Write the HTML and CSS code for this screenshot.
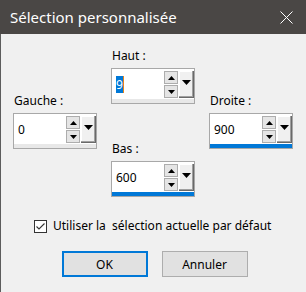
FILE: index.html
```html
<!DOCTYPE html>
<html lang="fr">
<head>
<meta charset="UTF-8" />
<title>Sélection personnalisée</title>
<link rel="stylesheet" href="styles.css">
</head>
<body>

<div class="dialog">
  <div class="titlebar">
    <span class="title">Sélection personnalisée</span>
    <svg class="close" width="13" height="13" viewBox="0 0 13 13">
      <path d="M0.5 0.5 L12.5 12.5 M12.5 0.5 L0.5 12.5" stroke="#fff" stroke-width="1" fill="none"/>
    </svg>
  </div>

  <div class="content">
    <div class="margins">
      <div class="field side">
        <div class="label">Gauche :</div>
        <div class="spin">
          <div class="value">0</div>
          <div class="arrow up"><svg width="7" height="4"><polygon points="0,4 3.5,0 7,4" fill="#000"/></svg></div>
          <div class="arrow down"><svg width="7" height="4"><polygon points="0,0 7,0 3.5,4" fill="#000"/></svg></div>
          <div class="drop"><svg width="9" height="5"><polygon points="0,0 9,0 4.5,5" fill="#000"/></svg></div>
          <div class="bar"></div>
        </div>
      </div>

      <div class="middle">
        <div class="field">
          <div class="label">Haut :</div>
          <div class="spin">
            <div class="value"><span class="sel">9</span><span class="caret"></span></div>
            <div class="arrow up"><svg width="7" height="4"><polygon points="0,4 3.5,0 7,4" fill="#000"/></svg></div>
            <div class="arrow down"><svg width="7" height="4"><polygon points="0,0 7,0 3.5,4" fill="#000"/></svg></div>
            <div class="drop"><svg width="9" height="5"><polygon points="0,0 9,0 4.5,5" fill="#000"/></svg></div>
            <div class="bar"></div>
          </div>
        </div>
        <div class="field">
          <div class="label">Bas :</div>
          <div class="spin">
            <div class="value">600</div>
            <div class="arrow up"><svg width="7" height="4"><polygon points="0,4 3.5,0 7,4" fill="#000"/></svg></div>
            <div class="arrow down"><svg width="7" height="4"><polygon points="0,0 7,0 3.5,4" fill="#000"/></svg></div>
            <div class="drop"><svg width="9" height="5"><polygon points="0,0 9,0 4.5,5" fill="#000"/></svg></div>
            <div class="bar full"></div>
          </div>
        </div>
      </div>

      <div class="field side">
        <div class="label">Droite :</div>
        <div class="spin">
          <div class="value">900</div>
          <div class="arrow up"><svg width="7" height="4"><polygon points="0,4 3.5,0 7,4" fill="#000"/></svg></div>
          <div class="arrow down"><svg width="7" height="4"><polygon points="0,0 7,0 3.5,4" fill="#000"/></svg></div>
          <div class="drop"><svg width="9" height="5"><polygon points="0,0 9,0 4.5,5" fill="#000"/></svg></div>
          <div class="bar full"></div>
        </div>
      </div>
    </div>

    <label class="check">
      <span class="box">
        <svg width="11" height="11" viewBox="0 0 11 11"><path d="M1.5 5.5 L4 8 L9.5 2.5" stroke="#333" stroke-width="1.1" fill="none"/></svg>
      </span>
      <span>Utiliser la&nbsp; sélection actuelle par défaut</span>
    </label>

    <div class="buttons">
      <button class="btn default">OK</button>
      <button class="btn">Annuler</button>
    </div>
  </div>
</div>

</body>
</html>
```

FILE: styles.css
```css
body {
  margin: 0;
  background: #f0f0f0;
  font-family: "Noto Sans", "Liberation Sans", sans-serif;
  font-size: 12px;
  color: #000;
}
.dialog {
  width: 306px;
  height: 292px;
  box-sizing: border-box;
  border-left: 1px solid #5c5c5c;
  background: #f0f0f0;
}
.titlebar {
  height: 34px;
  background: #4a4745;
  display: flex;
  align-items: center;
  justify-content: space-between;
  padding: 0 13px 0 10px;
  margin-left: -1px;
  color: #fff;
}
.title {
  font-size: 15px;
}
.close {
  margin-top: 1px;
}
.content {
  padding: 14px 0 0 12px;
}
.margins {
  display: flex;
  gap: 14px;
}
.middle {
  display: flex;
  flex-direction: column;
  gap: 37px;
}
.side {
  align-self: center;
  margin-bottom: 3px;
}
.label {
  line-height: 16px;
  margin-bottom: 4px;
  padding-left: 1px;
}
.spin {
  display: grid;
  grid-template-columns: 1fr 14px 15px;
  grid-template-rows: 13px 13px 4px;
  gap: 1px;
  width: 84px;
  height: 36px;
  box-sizing: border-box;
  padding-top: 2px;
  border: 1px solid #a8a8a8;
  background: #fff;
}
.value {
  grid-row: 1 / 3;
  grid-column: 1;
  display: flex;
  align-items: center;
  padding-left: 4px;
}
.sel {
  display: inline-block;
  background: #0078d7;
  color: #fff;
  line-height: 17px;
}
.caret {
  display: inline-block;
  width: 1px;
  height: 17px;
  background: #e8841a;
}
.arrow {
  grid-column: 2;
  border: 1px solid #adadad;
  background: #e5e5e5;
  display: flex;
  align-items: center;
  justify-content: center;
}
.arrow svg {
  display: block;
}
.drop {
  grid-column: 3;
  grid-row: 1 / 3;
  background: #f0f0f0;
  border-right: 1px solid #696969;
  border-bottom: 1px solid #696969;
  box-shadow: inset -1px -1px #a0a0a0, inset 1px 1px #fff;
  display: flex;
  justify-content: center;
  padding-top: 9px;
  box-sizing: border-box;
}
.drop svg {
  display: block;
}
.bar {
  grid-row: 3;
  grid-column: 1 / 4;
  background: #e8e8e8;
}
.bar.full {
  background: #0078d7;
}
.check {
  display: flex;
  align-items: center;
  gap: 6px;
  margin: 21px 0 0 21px;
  line-height: 16px;
}
.check .box {
  width: 13px;
  height: 13px;
  box-sizing: border-box;
  border: 1px solid #333;
  background: #fff;
  display: flex;
  align-items: center;
  justify-content: center;
}
.check .box svg {
  display: block;
}
.buttons {
  display: flex;
  justify-content: center;
  gap: 14px;
  margin-top: 17px;
  padding-right: 10px;
}
.btn {
  width: 86px;
  height: 26px;
  background: #e1e1e1;
  border: 1px solid #adadad;
  font-family: inherit;
  font-size: 12px;
  color: #000;
  padding: 0;
}
.btn.default {
  border: 2px solid #0078d7;
}
```
